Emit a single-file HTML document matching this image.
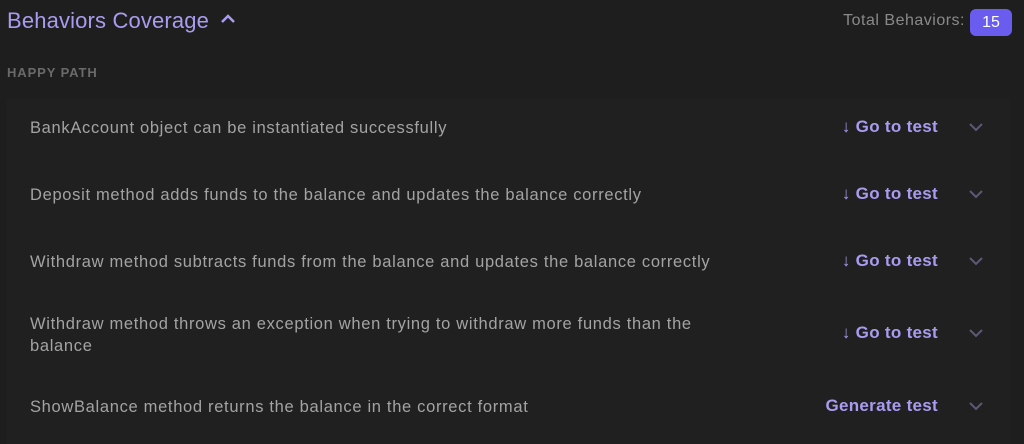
<!DOCTYPE html>
<html><head><style>
body{margin:0;width:1024px;height:444px;background:#1e1e1e;font-family:"Liberation Sans",sans-serif;overflow:hidden;position:relative}
.t{position:absolute;left:7px;top:8px;font-size:22px;color:#a99cf0;letter-spacing:.15px}
.car{position:absolute;left:220px;top:13px}
.tot{position:absolute;right:59px;top:12px;font-size:16px;color:#8a8a8a;letter-spacing:.5px}
.badge{position:absolute;left:970px;top:9px;width:42px;height:27px;border-radius:6px;background:#6b5cf0;color:#fff;font-size:16px;text-align:center;line-height:27px}
.hp{position:absolute;left:7px;top:65px;font-size:13px;font-weight:bold;color:#6a6a6a;letter-spacing:.9px}
.panel{position:absolute;left:7px;top:98px;width:1003px;height:346px;background:#202020}
.r{position:absolute;left:30px;font-size:16.5px;letter-spacing:.68px;color:#a3a3a3;line-height:22px;width:690px}
.g{position:absolute;right:86px;font-size:17px;font-weight:bold;color:#a99cf0;letter-spacing:.3px}
.c{position:absolute;left:968px}
</style></head><body>
<div class="t">Behaviors Coverage</div>
<svg class="car" width="16" height="12" viewBox="0 0 16 12"><path d="M2 9 L8 3 L14 9" stroke="#a99cf0" stroke-width="2.5" fill="none"/></svg>
<div class="tot">Total Behaviors:</div>
<div class="badge">15</div>
<div class="hp">HAPPY PATH</div>
<div class="panel"></div>
<div class="r" style="top:117px">BankAccount object can be instantiated successfully</div>
<div class="g" style="top:117px">↓ Go to test</div>
<div class="r" style="top:184px">Deposit method adds funds to the balance and updates the balance correctly</div>
<div class="g" style="top:184px">↓ Go to test</div>
<div class="r" style="top:251px">Withdraw method subtracts funds from the balance and updates the balance correctly</div>
<div class="g" style="top:251px">↓ Go to test</div>
<div class="r" style="top:313px">Withdraw method throws an exception when trying to withdraw more funds than the balance</div>
<div class="g" style="top:323px">↓ Go to test</div>
<div class="r" style="top:396px">ShowBalance method returns the balance in the correct format</div>
<div class="g" style="top:396px">Generate test</div>
<svg class="c" style="top:122px" width="16" height="10"><path d="M2 2 L8 8 L14 2" stroke="#5e5876" stroke-width="2" fill="none"/></svg>
<svg class="c" style="top:189px" width="16" height="10"><path d="M2 2 L8 8 L14 2" stroke="#5e5876" stroke-width="2" fill="none"/></svg>
<svg class="c" style="top:256px" width="16" height="10"><path d="M2 2 L8 8 L14 2" stroke="#5e5876" stroke-width="2" fill="none"/></svg>
<svg class="c" style="top:328px" width="16" height="10"><path d="M2 2 L8 8 L14 2" stroke="#5e5876" stroke-width="2" fill="none"/></svg>
<svg class="c" style="top:401px" width="16" height="10"><path d="M2 2 L8 8 L14 2" stroke="#5e5876" stroke-width="2" fill="none"/></svg>
</body></html>
